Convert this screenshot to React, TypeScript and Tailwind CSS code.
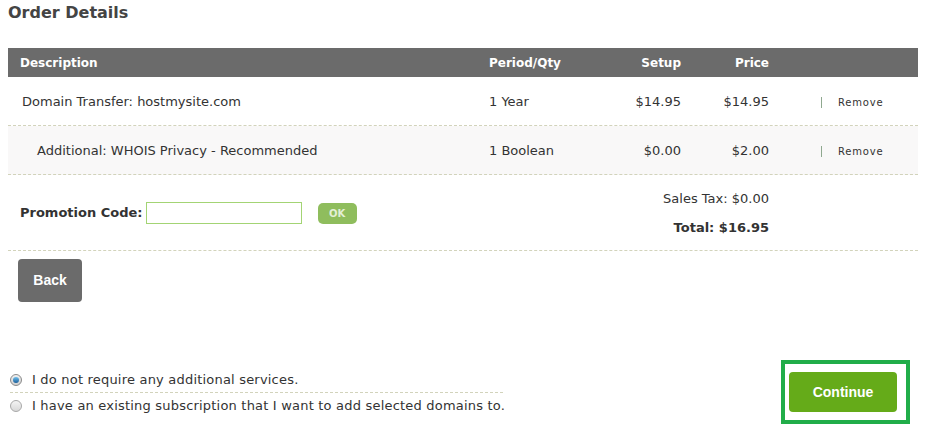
export default function App() {
  const items = [
    { desc: 'Domain Transfer: hostmysite.com', qty: '1 Year', setup: '$14.95', price: '$14.95', indent: false },
    { desc: 'Additional: WHOIS Privacy - Recommended', qty: '1 Boolean', setup: '$0.00', price: '$2.00', indent: true },
  ];

  return (
    <div className="w-[926px] h-[430px] bg-white text-[#333] font-['DejaVu_Sans',Verdana,sans-serif] overflow-hidden">
      <h1 className="pl-2 pt-[3px] text-[16px] leading-5 font-bold text-[#444]">Order Details</h1>

      <div className="mx-2 mt-[25px]">
        {/* header */}
        <div className="grid grid-cols-[481px_120px_72px_88px_1fr] h-[29px] items-center pt-[1px] bg-[#6b6b6b] text-white text-[12px] font-bold">
          <div className="pl-3">Description</div>
          <div>Period/Qty</div>
          <div className="text-right">Setup</div>
          <div className="text-right">Price</div>
          <div />
        </div>

        {items.map((item, i) => (
          <div
            key={i}
            className={`grid grid-cols-[481px_120px_72px_88px_1fr] h-[49px] items-center pt-[2px] text-[13px] border-b border-dashed border-[#d2d3bb] ${item.indent ? 'bg-[#f9f8f8]' : 'bg-white'}`}
          >
            <div className={item.indent ? 'pl-[29px]' : 'pl-[14px]'}>{item.desc}</div>
            <div>{item.qty}</div>
            <div className="text-right">{item.setup}</div>
            <div className="text-right">{item.price}</div>
            <div className="flex items-center pl-[52px] gap-4">
              <span className="w-px h-[11px] bg-[#8fa88f]" />
              <span className="text-[10px] tracking-[0.8px] text-[#333]">Remove</span>
            </div>
          </div>
        ))}

        {/* promo + totals */}
        <div className="grid grid-cols-[673px_88px_1fr] h-[76px] border-b border-dashed border-[#d2d3bb]">
          <div className="flex items-center pl-3 pt-[1px]">
            <span className="text-[13px] font-bold">Promotion Code:</span>
            <input className="ml-[3px] w-[156px] h-[22px] border border-[#a3d474] outline-none" />
            <button className="ml-4 w-[39px] h-[21px] rounded-[5px] bg-[#8fbd5d] text-[#e3efd6] text-[10px] font-bold">OK</button>
          </div>
          <div className="flex flex-col items-end pt-[16px] whitespace-nowrap">
            <span className="text-[13px] leading-4">Sales Tax: $0.00</span>
            <span className="text-[13px] leading-4 font-bold mt-[13px]">Total: $16.95</span>
          </div>
          <div />
        </div>

        <button className="mt-2 ml-[10px] w-16 h-[43px] rounded-[4px] bg-[#6b6b6b] text-white text-[14px] font-bold font-['Liberation_Sans',Arial,sans-serif]">
          Back
        </button>
      </div>

      <div className="flex items-start justify-between mt-[58px] pr-4">
        <div className="pl-[10px] pt-[13px] text-[13px] tracking-[0.2px]">
          <label className="flex items-center gap-[10px] h-[14px]">
            <span className="w-3 h-3 rounded-full border border-[#8a8a8a] bg-gradient-to-b from-[#f0f0f0] to-[#d0d0d0] flex items-center justify-center">
              <span className="w-[6px] h-[6px] rounded-full bg-gradient-to-b from-[#6fc0ee] to-[#1a5f9a]" />
            </span>
            I do not require any additional services.
          </label>
          <div className="w-[493px] mt-[5px] border-b border-dashed border-[#d2d3bb]" />
          <label className="flex items-center gap-[10px] h-[14px] mt-[6px]">
            <span className="w-3 h-3 rounded-full border border-[#a8a8a8] bg-gradient-to-b from-[#f4f4f4] to-[#d8d8d8]" />
            I have an existing subscription that I want to add selected domains to.
          </label>
        </div>

        <div className="w-[129px] h-[64px] border-4 border-[#21ad49] pl-1 pt-2">
          <button className="w-[108px] h-10 rounded-[4px] bg-[#65ab19] text-white text-[14px] font-bold font-['Liberation_Sans',Arial,sans-serif]">
            Continue
          </button>
        </div>
      </div>
    </div>
  );
}
